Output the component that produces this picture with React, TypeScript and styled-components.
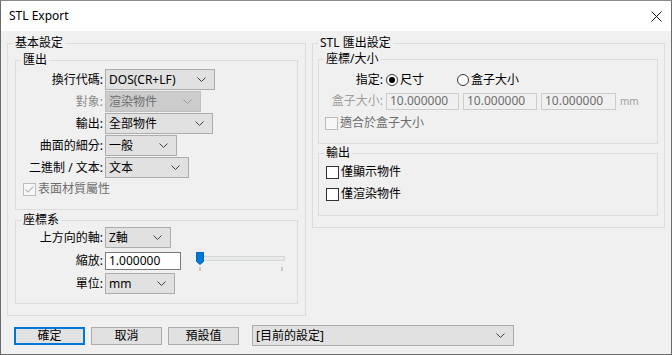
import { FunctionComponent, ReactNode } from "react";
import styled, { createGlobalStyle } from "styled-components";

const GlobalStyle = createGlobalStyle`
  html, body {
    margin: 0;
    padding: 0;
    background: #f0f0f0;
  }
  body {
    font-family: "Noto Sans", "Noto Sans CJK TC", sans-serif;
    font-size: 12px;
    line-height: 14px;
    color: #000;
  }
`;

const Chevron = () => (
  <svg width="9" height="5" viewBox="0 0 9 5">
    <polyline points="0.5,0.5 4.5,4.5 8.5,0.5" fill="none" stroke="#404040" strokeWidth="1" />
  </svg>
);

interface SelectProps {
  value: string;
  width: number;
  disabled?: boolean;
}

const Select: FunctionComponent<SelectProps> = ({ value, width, disabled }) => (
  <SelectBox $width={width} $disabled={disabled}>
    <span>{value}</span>
    <Chevron />
  </SelectBox>
);

const Check = ({ checked, disabled }: { checked?: boolean; disabled?: boolean }) => (
  <CheckBox $disabled={disabled}>
    {checked && (
      <svg width="11" height="11" viewBox="0 0 11 11">
        <polyline points="1.5,5.5 4,8 9.5,2.5" fill="none" stroke={disabled ? "#bcbcbc" : "#000"} strokeWidth="1.2" />
      </svg>
    )}
  </CheckBox>
);

const CheckRow: FunctionComponent<{ label: string; checked?: boolean; disabled?: boolean; indent: number }> = ({
  label,
  checked,
  disabled,
  indent,
}) => (
  <CheckLine $indent={indent} $disabled={disabled}>
    <Check checked={checked} disabled={disabled} />
    <span>{label}</span>
  </CheckLine>
);

interface GroupProps {
  title: string;
  width?: number;
  children: ReactNode;
  className?: string;
}

const Group: FunctionComponent<GroupProps> = ({ title, width, children, className }) => (
  <Fieldset $width={width}>
    <Legend>{title}</Legend>
    <div className={className}>{children}</div>
  </Fieldset>
);

const Slider = () => (
  <SliderArt width="92" height="20" viewBox="0 0 92 20">
    <rect x="7.5" y="4.5" width="81" height="4" fill="#e7eaea" stroke="#d6d6d6" />
    <path d="M0.5 0.5 H7.5 V9.5 L4 12.5 L0.5 9.5 Z" fill="#0078d7" stroke="#0067bd" />
    <line x1="4" y1="15" x2="4" y2="19" stroke="#a0a0a0" />
    <line x1="86" y1="15" x2="86" y2="19" stroke="#a0a0a0" />
  </SliderArt>
);

const App = () => {
  return (
    <>
      <GlobalStyle />
      <Window>
        <TitleBar>
          <Title>STL Export</Title>
          <svg width="11" height="11" viewBox="0 0 11 11">
            <path d="M0.5 0.5 L10.5 10.5 M10.5 0.5 L0.5 10.5" stroke="#111" strokeWidth="1" />
          </svg>
        </TitleBar>
        <Body>
          <TopRow>
            <LeftOuter title="基本設定" width={299}>
              <ExportGroup title="匯出">
                <FormRow>
                  <Label>換行代碼:</Label>
                  <Select value="DOS(CR+LF)" width={110} />
                </FormRow>
                <FormRow>
                  <Label $disabled>對象:</Label>
                  <Select value="渲染物件" width={96} disabled />
                </FormRow>
                <FormRow>
                  <Label>輸出:</Label>
                  <Select value="全部物件" width={108} />
                </FormRow>
                <FormRow>
                  <Label>曲面的細分:</Label>
                  <Select value="一般" width={72} />
                </FormRow>
                <FormRow>
                  <Label>二進制 / 文本:</Label>
                  <Select value="文本" width={84} />
                </FormRow>
                <CheckRow label="表面材質屬性" checked disabled indent={7} />
              </ExportGroup>
              <CoordGroup title="座標系">
                <FormRow>
                  <Label>上方向的軸:</Label>
                  <Select value="Z軸" width={66} />
                </FormRow>
                <FormRow>
                  <Label>縮放:</Label>
                  <TextInput $width={76}>1.000000</TextInput>
                  <Slider />
                </FormRow>
                <FormRow>
                  <Label>單位:</Label>
                  <Select value="mm" width={70} />
                </FormRow>
              </CoordGroup>
            </LeftOuter>
            <RightOuter title="STL 匯出設定" width={353}>
              <SizeGroup title="座標/大小">
                <SizeRow>
                  <SizeLabel>指定:</SizeLabel>
                  <RadioItem $width={71}>
                    <Radio $checked />
                    <span>尺寸</span>
                  </RadioItem>
                  <RadioItem>
                    <Radio />
                    <span>盒子大小</span>
                  </RadioItem>
                </SizeRow>
                <SizeRow>
                  <SizeLabel $disabled>盒子大小:</SizeLabel>
                  <Inputs>
                    <TextInput $width={73} $disabled>10.000000</TextInput>
                    <TextInput $width={74} $disabled>10.000000</TextInput>
                    <TextInput $width={75} $disabled>10.000000</TextInput>
                    <Unit>mm</Unit>
                  </Inputs>
                </SizeRow>
                <CheckRow label="適合於盒子大小" disabled indent={6} />
              </SizeGroup>
              <OutputGroup title="輸出">
                <CheckRow label="僅顯示物件" indent={7} />
                <CheckRow label="僅渲染物件" indent={7} />
              </OutputGroup>
            </RightOuter>
          </TopRow>
          <ButtonRow>
            <Button $primary>確定</Button>
            <Button>取消</Button>
            <Button>預設值</Button>
            <PresetSelect>
              <Select value="[目前的設定]" width={262} />
            </PresetSelect>
          </ButtonRow>
        </Body>
      </Window>
    </>
  );
};

const Window = styled.div`
  width: 672px;
  height: 355px;
  box-sizing: border-box;
  border: 1px solid #6b6b6b;
  border-top-color: #8a8a8a;
  display: flex;
  flex-direction: column;
  background: #f0f0f0;
  overflow: hidden;
`;

const TitleBar = styled.div`
  height: 30px;
  flex: none;
  background: #fff;
  display: flex;
  align-items: center;
  justify-content: space-between;
  padding: 0 9px 0 8px;
`;

const Title = styled.span`
  font-family: "Noto Sans", sans-serif;
  font-size: 12px;
`;

const Body = styled.div`
  flex: 1;
  padding: 5px 6px 0 6px;
  display: flex;
  flex-direction: column;
`;

const TopRow = styled.div`
  display: flex;
  align-items: flex-start;
  gap: 6px;
`;

const Fieldset = styled.fieldset<{ $width?: number }>`
  margin: 0;
  min-width: 0;
  width: ${(p) => (p.$width ? `${p.$width}px` : "auto")};
  box-sizing: border-box;
  border: 1px solid #dcdcdc;
  padding: 0;
`;

const Legend = styled.legend`
  padding: 0 2px;
  margin-left: 5px;
  line-height: 14px;
`;

const LeftOuter = styled(Group)`
  padding: 3px 7px 11px 7px;
  display: flex;
  flex-direction: column;
  gap: 3px;
`;

const RightOuter = styled(Group)`
  padding: 2px 6px 11px 5px;
  display: flex;
  flex-direction: column;
  gap: 2px;
`;

const ExportGroup = styled(Group)`
  padding: 2px 0 10px 0;
  display: flex;
  flex-direction: column;
  gap: 1px;
`;

const CoordGroup = styled(Group)`
  padding: 0 0 9px 0;
  display: flex;
  flex-direction: column;
  gap: 2px;
`;

const SizeGroup = styled(Group)`
  padding: 5px 0 10px 0;
  display: flex;
  flex-direction: column;
  gap: 3px;
`;

const OutputGroup = styled(Group)`
  padding: 2px 0 11px 0;
  display: flex;
  flex-direction: column;
  gap: 2px;
`;

const FormRow = styled.div`
  display: flex;
  align-items: center;
  height: 21px;
`;

const Label = styled.span<{ $disabled?: boolean }>`
  width: 87px;
  margin-right: 2px;
  text-align: right;
  white-space: nowrap;
  color: ${(p) => (p.$disabled ? "#8c8c8c" : "#000")};
`;

const SelectBox = styled.div<{ $width: number; $disabled?: boolean }>`
  width: ${(p) => p.$width}px;
  height: 21px;
  box-sizing: border-box;
  border: 1px solid ${(p) => (p.$disabled ? "#bfbfbf" : "#adadad")};
  background: ${(p) => (p.$disabled ? "#cccccc" : "#e1e1e1")};
  color: ${(p) => (p.$disabled ? "#6d6d6d" : "#000")};
  display: flex;
  align-items: center;
  justify-content: space-between;
  padding: 0 8px 0 3px;
  white-space: nowrap;
  svg polyline {
    stroke: ${(p) => (p.$disabled ? "#9a9a9a" : "#404040")};
  }
`;

const TextInput = styled.div<{ $width: number; $disabled?: boolean }>`
  width: ${(p) => p.$width}px;
  height: ${(p) => (p.$disabled ? 17 : 18)}px;
  box-sizing: border-box;
  border: 1px solid ${(p) => (p.$disabled ? "#cccccc" : "#7a7a7a")};
  background: ${(p) => (p.$disabled ? "#f0f0f0" : "#fff")};
  color: ${(p) => (p.$disabled ? "#6d6d6d" : "#000")};
  display: flex;
  align-items: center;
  padding-left: 3px;
`;

const SliderArt = styled.svg`
  margin-left: 15px;
  margin-top: 2px;
`;

const CheckLine = styled.div<{ $indent: number; $disabled?: boolean }>`
  display: flex;
  align-items: center;
  gap: 2px;
  height: 20px;
  padding-left: ${(p) => p.$indent}px;
  color: ${(p) => (p.$disabled ? "#6d6d6d" : "#000")};
`;

const CheckBox = styled.span<{ $disabled?: boolean }>`
  width: 13px;
  height: 13px;
  box-sizing: border-box;
  border: 1px solid ${(p) => (p.$disabled ? "#bcbcbc" : "#333")};
  background: ${(p) => (p.$disabled ? "#f7f7f7" : "#fff")};
  display: flex;
  align-items: center;
  justify-content: center;
`;

const SizeRow = styled.div`
  display: flex;
  align-items: center;
  height: 18px;
`;

const SizeLabel = styled.span<{ $disabled?: boolean }>`
  width: 64px;
  margin-right: 3px;
  text-align: right;
  white-space: nowrap;
  color: ${(p) => (p.$disabled ? "#a0a0a0" : "#000")};
`;

const RadioItem = styled.span<{ $width?: number }>`
  display: flex;
  align-items: center;
  gap: 2px;
  width: ${(p) => (p.$width ? `${p.$width}px` : "auto")};
`;

const Radio = styled.span<{ $checked?: boolean }>`
  width: 12px;
  height: 12px;
  box-sizing: border-box;
  border: 1px solid #333;
  border-radius: 50%;
  background: #fff;
  display: flex;
  align-items: center;
  justify-content: center;
  &::after {
    content: "";
    width: 6px;
    height: 6px;
    border-radius: 50%;
    background: ${(p) => (p.$checked ? "#000" : "transparent")};
  }
`;

const Inputs = styled.div`
  display: flex;
  align-items: center;
  gap: 4px;
`;

const Unit = styled.span`
  color: #a0a0a0;
  font-size: 10px;
`;

const ButtonRow = styled.div`
  display: flex;
  align-items: center;
  margin-top: 9px;
  padding-left: 7px;
  gap: 6px;
`;

const Button = styled.div<{ $primary?: boolean }>`
  width: 71px;
  height: 18px;
  box-sizing: border-box;
  border: ${(p) => (p.$primary ? "2px solid #0078d7" : "1px solid #adadad")};
  background: #e1e1e1;
  display: flex;
  align-items: center;
  justify-content: center;
`;

const PresetSelect = styled.div`
  margin-left: 7px;
`;

export default App;
